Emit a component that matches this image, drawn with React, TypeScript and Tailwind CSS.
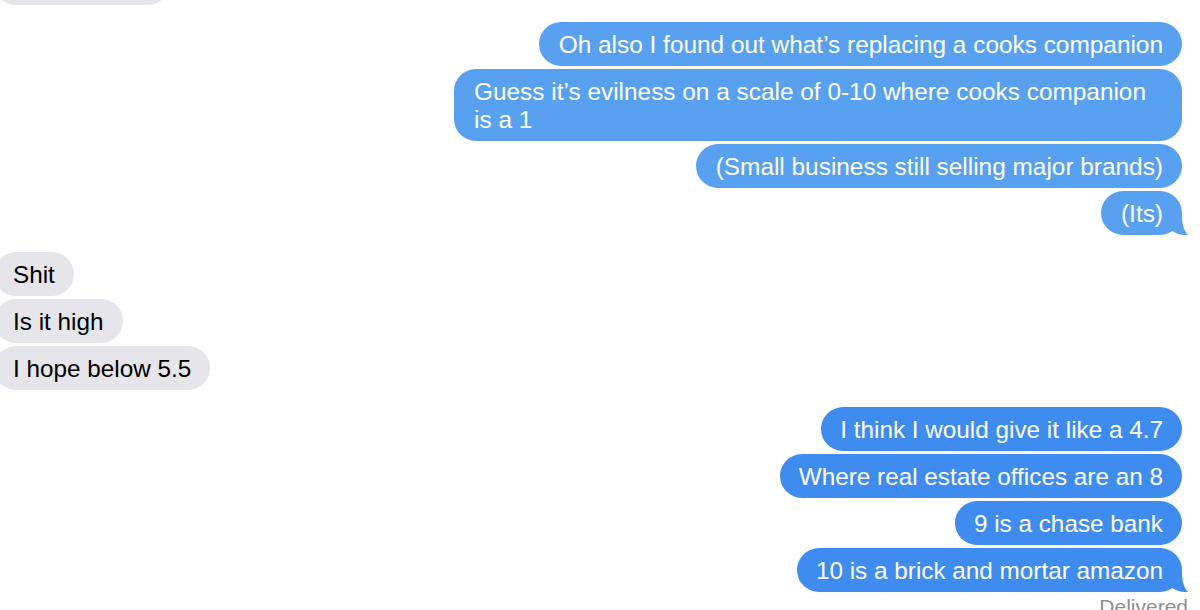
import React from 'react';

type Msg = { text: string; tail?: boolean; width?: string };

const topGroup: Msg[] = [
  { text: 'Oh also I found out what’s replacing a cooks companion' },
  { text: 'Guess it’s evilness on a scale of 0-10 where cooks companion is a 1', width: 'w-[728px]' },
  { text: '(Small business still selling major brands)' },
  { text: '(Its)', tail: true },
];

const replies = ['Shit', 'Is it high', 'I hope below 5.5'];

const bottomGroup: Msg[] = [
  { text: 'I think I would give it like a 4.7' },
  { text: 'Where real estate offices are an 8' },
  { text: '9 is a chase bank' },
  { text: '10 is a brick and mortar amazon', tail: true },
];

const font = { fontFamily: '"Liberation Sans", Arial, sans-serif' };

function Tail({ color }: { color: string }) {
  return (
    <svg className="absolute right-[-6px] bottom-0" width="20" height="20" viewBox="0 0 20 20">
      <path d="M2 0 H14 C14 9 16 16 20 20 C14 20.5 8 19 3 15 Z" fill={color} />
    </svg>
  );
}

export default function App() {
  return (
    <div className="w-[1200px] h-[610px] overflow-hidden bg-white flex flex-col pr-[18px]" style={font}>
      {/* partial bubble from above */}
      <div className="shrink-0 self-start -ml-[6px] mt-[-39px] w-[176px] h-[44px] rounded-[22px] bg-[#e5e5ea]" />

      {/* sent group 1 */}
      <div className="shrink-0 mt-[17px] flex flex-col items-end gap-[3px]">
        {topGroup.map((m) => (
          <div
            key={m.text}
            className={`relative rounded-[22px] bg-[#58a1f0] pl-[20px] pr-[19px] pt-[9px] pb-[7px] text-white text-[24.4px] leading-[28px] ${m.width ?? ''}`}
          >
            {m.text}
            {m.tail && <Tail color="#58a1f0" />}
          </div>
        ))}
      </div>

      {/* received */}
      <div className="shrink-0 mt-[17px] flex flex-col items-start gap-[3px] -ml-[6px]">
        {replies.map((r) => (
          <div
            key={r}
            className="rounded-[22px] bg-[#e5e5ea] px-[19px] pt-[10px] pb-[8px] text-black text-[24.3px] leading-[26px]"
          >
            {r}
          </div>
        ))}
      </div>

      {/* sent group 2 */}
      <div className="shrink-0 mt-[17px] flex flex-col items-end gap-[3px]">
        {bottomGroup.map((m) => (
          <div
            key={m.text}
            className="relative rounded-[22px] bg-[#3f8cf0] px-[19px] pt-[10px] pb-[8px] text-white text-[24.3px] leading-[26px]"
          >
            {m.text}
            {m.tail && <Tail color="#3f8cf0" />}
          </div>
        ))}
      </div>

      <div className="shrink-0 self-end -mr-[6px] mt-[3px] text-[21px] leading-[24px] text-[#8e8e93]">
        Delivered
      </div>
    </div>
  );
}
